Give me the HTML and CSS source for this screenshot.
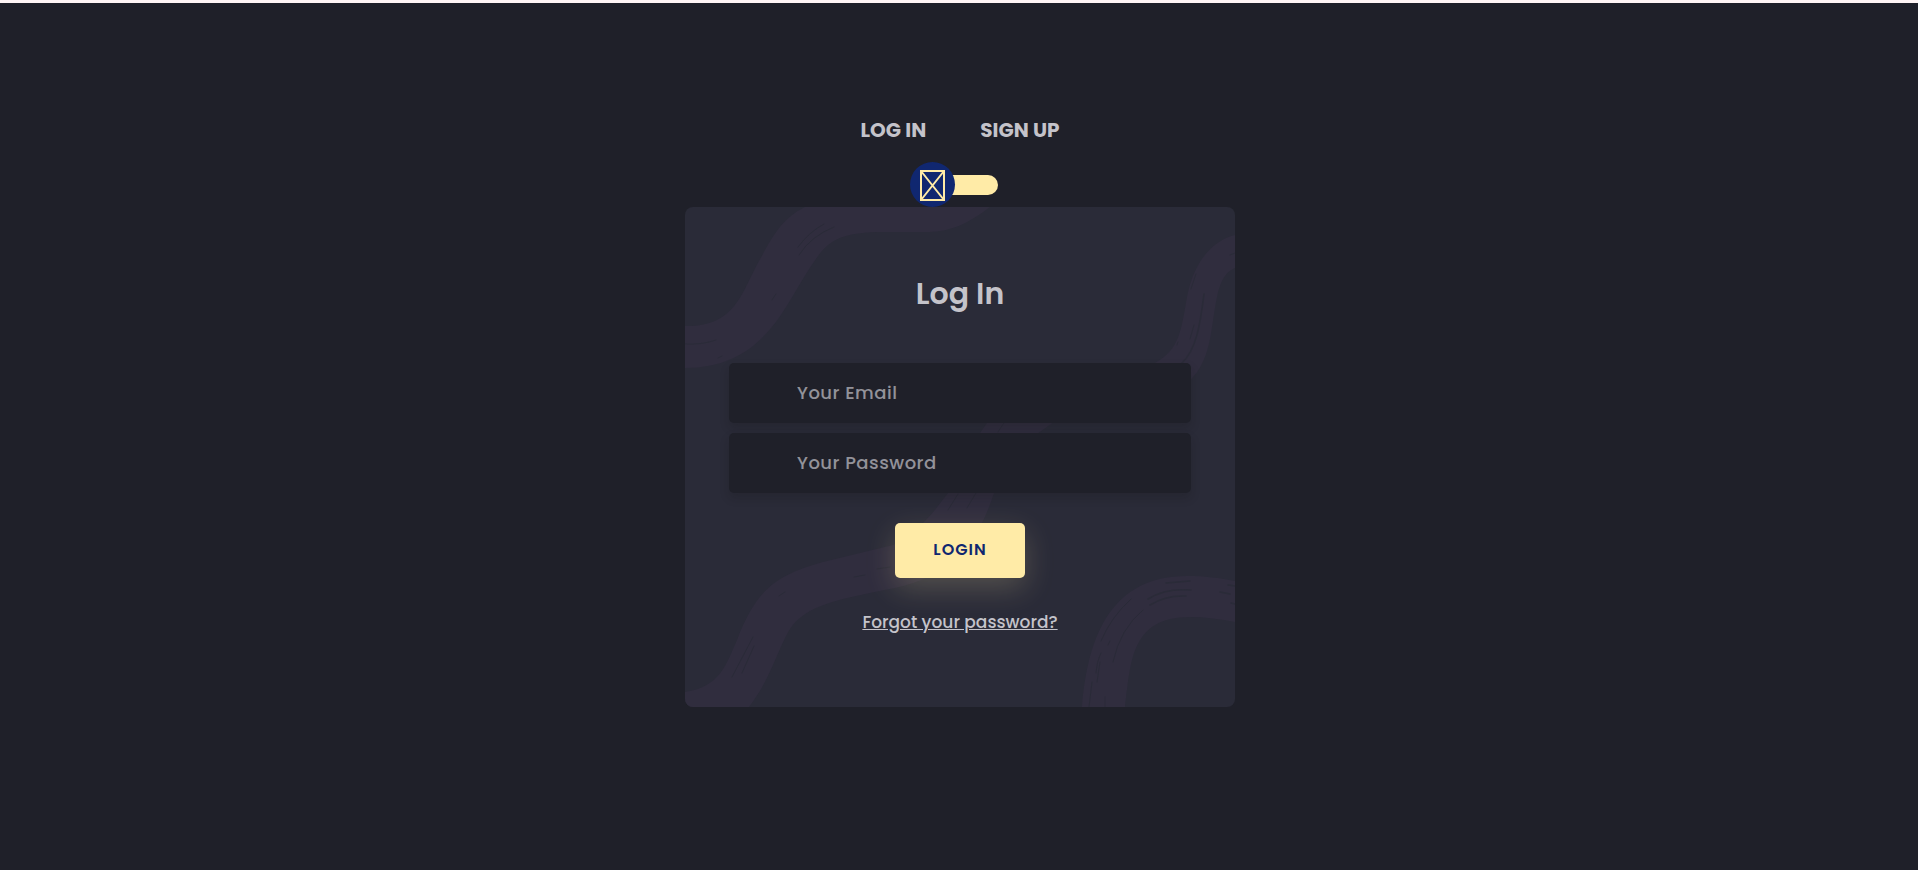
FILE: index.html
```html
<!DOCTYPE html>
<html lang="en">
<head>
<meta charset="utf-8">
<meta name="viewport" content="width=device-width, initial-scale=1">
<title>Log In</title>
<link rel="stylesheet" href="styles.css">
</head>
<body>
<main class="page">
  <label class="modes" for="mode"><span>LOG IN</span><span>SIGN UP</span></label>
  <div class="switch">
    <input class="switch-track" type="checkbox" id="mode">
    <span class="switch-knob">
      <svg width="25" height="31" viewBox="0 0 25 31" fill="none" stroke="#ffeba7" stroke-width="2" aria-hidden="true">
        <path d="M1 1H24V30H1ZM1 1L24 30M24 1L1 30"/>
      </svg>
    </span>
  </div>
  <form class="card">
    <svg class="card-art" viewBox="0 0 550 500" preserveAspectRatio="none" aria-hidden="true">
      <g fill="#302d3e">
        <path d="M0 119C50 120 56 87 74 54C88 29 96 12 120 0H305C283 17 264 25 244 25H200C145 25 140 38 121 67C99 101 77 161 0 161Z"/>
        <path d="M550 28C525 34 508 58 502 90C496 123 495 142 470 156L440 172L490 185C528 162 524 129 532 90C536 72 541 65 550 61Z"/>
        <path d="M0 485C36 480 42 455 52 433C72 381 92 368 138 355L208 338C242 318 250 302 263 286C280 260 285 238 302 216L350 190L410 190C352 225 330 236 309 286C292 340 262 370 210 381C145 394 116 399 101 429C87 458 84 473 64 500H0Z"/>
        <path d="M397 500C403 426 428 369 502 369C520 369 535 371 550 374V415C535 412 520 410 505 410C445 410 446 456 440 500Z"/>
      </g>
      <g fill="none" stroke="#2a2b38" stroke-linecap="round">
        <path d="M113 40Q124 25 139 17M114 48Q126 29 149 20M0 137Q17 138 31 133M87 93L91 87M33 151L37 149"/>
        <path d="M511 67L506 82M509 118L505 132M493 135L492 138M545 48L550 46"/>
        <path stroke-width="1.5" d="M519 87C515 119 511 143 497 156"/>
        <path d="M68 430L47 470M69 439L57 466M94 389L100 385M169 370L180 368M263 303L273 287M282 301L291 286M313 225L319 216M192 362L205 360"/>
        <path d="M446 392Q426 410 416 434M458 403Q435 422 428 455M404 500L407 475M411 466Q412 454 416 446M420 500V490M423 438L425 434M412 475L415 455"/>
        <path stroke-width="1.5" d="M463 392Q480 381 506 383M465 398Q481 388 501 389M481 376L505 374M535 385L545 387M543 378L550 379M546 396L550 397"/>
      </g>
    </svg>
    <h1 class="title">Log In</h1>
    <div class="fields">
      <input class="field" type="email" placeholder="Your Email" aria-label="Your Email">
      <input class="field" type="password" placeholder="Your Password" aria-label="Your Password">
    </div>
    <button class="submit" type="button">LOGIN</button>
    <a class="forgot" href="#">Forgot your password?</a>
  </form>
</main>
</body>
</html>
```
FILE: styles.css
```css
* {
  box-sizing: border-box;
}

body {
  margin: 0;
  min-height: 100vh;
  border-top: 3px solid #fff5f5;
  background: #1f2029;
  color: #c4c3ca;
  font-family: Poppins, Inter, "Open Sans", sans-serif;
  font-size: 16px;
  font-weight: 500;
  line-height: 24px;
}

.page {
  display: flex;
  flex-direction: column;
  align-items: center;
  padding: 112px 14px 48px 16px;
}

.modes {
  display: flex;
  gap: 54px;
  font-size: 20px;
  font-weight: 700;
  line-height: 30px;
  cursor: pointer;
}

.switch {
  position: relative;
  margin: 30px 0 12px;
  width: 76px;
  height: 20px;
}

.switch-track {
  display: block;
  appearance: none;
  margin: 0;
  width: 100%;
  height: 100%;
  border-radius: 10px;
  background: #ffeba7;
  cursor: pointer;
}

.switch-knob {
  position: absolute;
  left: -12px;
  top: -13px;
  display: grid;
  place-items: center;
  width: 45px;
  height: 45px;
  padding-top: 2px;
  border-radius: 50%;
  background: #102770;
  pointer-events: none;
}

.card {
  position: relative;
  isolation: isolate;
  display: flex;
  flex-direction: column;
  align-items: center;
  width: 100%;
  max-width: 550px;
  padding: 67px 44px 73px;
  border-radius: 8px;
  background: #2a2b38;
  overflow: hidden;
}

.card-art {
  position: absolute;
  inset: 0;
  z-index: -1;
  width: 100%;
  height: 100%;
}

.title {
  margin: 0 0 49px;
  font-size: 30px;
  font-weight: 600;
  line-height: 40px;
}

.fields {
  display: grid;
  gap: 10px;
  width: 100%;
  margin-bottom: 30px;
}

.field {
  width: 100%;
  height: 60px;
  padding: 0 20px 2px 68px;
  border: 0;
  border-radius: 5px;
  outline: none;
  background: #1f2029;
  box-shadow: 0 5px 10px rgba(21, 21, 21, 0.2);
  color: #c4c3ca;
  font: inherit;
  font-size: 18px;
  letter-spacing: 0.5px;
}

.field::placeholder {
  color: #c4c3ca;
  opacity: 0.7;
}

.submit {
  width: 130px;
  height: 55px;
  margin-bottom: 32px;
  padding: 0 0 2px;
  border: 0;
  border-radius: 5px;
  background: #ffeba7;
  box-shadow: 0 10px 30px rgba(255, 235, 167, 0.2);
  color: #102770;
  font: inherit;
  font-size: 16px;
  font-weight: 600;
  letter-spacing: 1px;
  cursor: pointer;
}

.forgot {
  color: #c4c3ca;
  font-size: 17px;
  text-decoration: underline;
}
```
